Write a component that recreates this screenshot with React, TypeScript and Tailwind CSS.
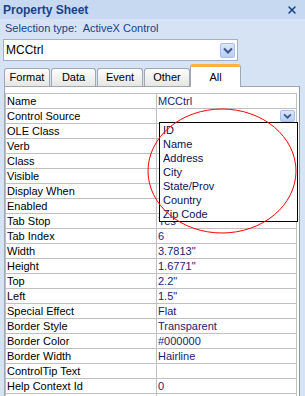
import { X } from "lucide-react";

const rows: { label: string; value: string }[] = [
  { label: "Name", value: "MCCtrl" },
  { label: "Control Source", value: "" },
  { label: "OLE Class", value: "" },
  { label: "Verb", value: "" },
  { label: "Class", value: "" },
  { label: "Visible", value: "" },
  { label: "Display When", value: "" },
  { label: "Enabled", value: "" },
  { label: "Tab Stop", value: "Yes" },
  { label: "Tab Index", value: "6" },
  { label: "Width", value: "3.7813\"" },
  { label: "Height", value: "1.6771\"" },
  { label: "Top", value: "2.2\"" },
  { label: "Left", value: "1.5\"" },
  { label: "Special Effect", value: "Flat" },
  { label: "Border Style", value: "Transparent" },
  { label: "Border Color", value: "#000000" },
  { label: "Border Width", value: "Hairline" },
  { label: "ControlTip Text", value: "" },
  { label: "Help Context Id", value: "0" },
  { label: "", value: "" },
];

const fields = ["ID", "Name", "Address", "City", "State/Prov", "Country", "Zip Code"];

const tabs = [
  { name: "Format", w: "w-[46px]" },
  { name: "Data", w: "w-[45px]" },
  { name: "Event", w: "w-[46px]" },
  { name: "Other", w: "w-[46px]" },
];

function Chevron({ small }: { small?: boolean }) {
  return (
    <svg width={small ? 9 : 10} height={small ? 6 : 7} viewBox="0 0 10 7">
      <path d="M1 1.5 L5 5.5 L9 1.5" fill="none" stroke="#3d5583" strokeWidth="2" />
    </svg>
  );
}

export default function App() {
  return (
    <div className="relative w-[305px] h-[396px] overflow-hidden bg-[#d6e3f4] font-['Liberation_Sans',Arial,sans-serif] text-[11px]">
      {/* Title */}
      <div className="h-[19px] flex items-center justify-between pl-[3px] pr-[7px] bg-[#c7d9f1]">
        <span className="text-[12px] font-bold text-[#15428b]">Property Sheet</span>
        <X size={12} strokeWidth={3} className="text-[#15428b]" />
      </div>
      <div className="h-[18px] flex items-center pl-[5px] text-[#15428b] whitespace-pre">
        Selection type:  ActiveX Control
      </div>

      {/* Selector combo */}
      <div className="ml-[3px] mt-[2px] w-[235px] h-[22px] bg-white border border-[#9fb0c8] flex items-center justify-between pl-[2px] pr-[2px]">
        <span className="text-[12px] text-black">MCCtrl</span>
        <div className="w-[15px] h-[15px] rounded-[2px] bg-gradient-to-b from-[#dbe6fb] to-[#b9cdf5] border border-[#aac0ea] flex items-center justify-center">
          <Chevron />
        </div>
      </div>

      {/* Tabs */}
      <div className="ml-[4px] mt-[3px] h-[22px] flex items-end gap-[1px] relative z-10">
        {tabs.map((t) => (
          <div
            key={t.name}
            className={`${t.w} h-[18px] flex items-center justify-center border border-b-0 border-[#9ea7b3] rounded-t-[3px] bg-gradient-to-b from-[#fdfdfd] to-[#e6e6e3] text-black`}
          >
            {t.name}
          </div>
        ))}
        <div className="w-[51px] h-[23px] -mb-px -ml-[1px] flex items-center justify-center border border-b-0 border-[#9ea7b3] border-t-[3px] border-t-[#f6b63e] rounded-t-[3px] bg-white text-black">
          All
        </div>
      </div>

      {/* Tab page */}
      <div className="ml-[4px] w-[296px] border border-r-[#8e99a8] border-[#9ea7b3] bg-white pt-[6px] h-[320px]">
        <div className="w-[292px] border-t border-l border-r border-[#c0c0c0]">
          {rows.map((r, i) => (
            <div key={i} className="h-[15px] flex border-b border-[#c0c0c0] leading-[14px]">
              <div className="w-[151px] border-r border-[#c0c0c0] pl-[1px] text-black whitespace-nowrap overflow-hidden">
                {r.label}
              </div>
              <div className="flex-1 pl-[1px] text-[#1c1c6e] flex items-center justify-between pr-[1px]">
                <span>{r.value}</span>
                {r.label === "Control Source" && (
                  <div className="w-[15px] h-[12px] rounded-[2px] bg-gradient-to-b from-[#dbe6fb] to-[#b9cdf5] border border-[#aac0ea] flex items-center justify-center">
                    <Chevron small />
                  </div>
                )}
              </div>
            </div>
          ))}
        </div>
      </div>

      {/* Open dropdown list */}
      <div className="absolute left-[159px] top-[122px] w-[139px] h-[100px] bg-white border border-black z-20">
        {fields.map((f) => (
          <div key={f} className="h-[14px] leading-[14px] pl-[3px] text-[#101050]">
            {f}
          </div>
        ))}
      </div>

      {/* Red annotation circle */}
      <svg className="absolute left-0 top-0 z-30 pointer-events-none" width="305" height="396">
        <ellipse cx="222" cy="171" rx="74" ry="62" fill="none" stroke="#ff0000" strokeWidth="1" />
      </svg>
    </div>
  );
}
